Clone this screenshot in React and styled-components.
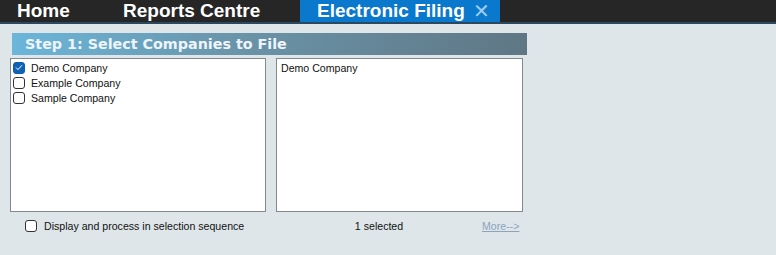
import React, { useState } from 'react'
import styled, { createGlobalStyle } from 'styled-components'

const GlobalStyle = createGlobalStyle`
	body {
		margin: 0;
		background: #dfe6ea;
		font-family: 'Liberation Sans', Arial, sans-serif;
	}
`

const Page = styled.div`
	width: 776px;
	height: 255px;
	background: #dfe6ea;
	overflow: hidden;
`
const TabBar = styled.div`
	display: flex;
	height: 22px;
	background: #262626;
	border-bottom: 2px solid #2a4860;
`
const Tab = styled.div`
	width: ${(p) => p.width}px;
	box-sizing: border-box;
	padding-left: 17px;
	display: flex;
	align-items: center;
	gap: 8px;
	background: ${(p) => (p.active ? '#0a78cc' : 'transparent')};
	color: #ffffff;
	font-family: 'Liberation Sans', Arial, sans-serif;
	font-weight: bold;
	font-size: 19px;
	line-height: 22px;
	white-space: nowrap;
`
const Close = styled.span`
	color: #9fcdf0;
	font-size: 20px;
	font-weight: normal;
	margin-left: 0px;
`
const Content = styled.div`
	padding: 9px 0 0 10px;
	width: 517px;
`
const Banner = styled.div`
	margin-left: 2px;
	height: 22px;
	padding-left: 13px;
	background: linear-gradient(to right, #6bb6da 0%, #6a93a8 45%, #5f7785 100%);
	color: #eef5fa;
	font-family: 'DejaVu Sans', Verdana, sans-serif;
	font-weight: bold;
	font-size: 14.3px;
	line-height: 23px;
`
const Lists = styled.div`
	display: flex;
	gap: 10px;
	margin-top: 3px;
`
const ListBox = styled.div`
	width: ${(p) => p.width}px;
	height: 154px;
	box-sizing: border-box;
	background: #ffffff;
	border: 1px solid #828790;
	padding: ${(p) => (p.plain ? '3px 4px' : '1px 2px')};
	font-size: 10.6px;
	color: #111;
`
const Row = styled.label`
	display: flex;
	align-items: center;
	gap: 6px;
	height: 15px;
	white-space: nowrap;
	cursor: default;
`
const Box = styled.span`
	width: 12px;
	height: 12px;
	box-sizing: border-box;
	border-radius: 3px;
	border: 1px solid ${(p) => (p.checked ? '#0f5fb0' : '#333')};
	background: ${(p) => (p.checked ? '#0f62b4' : '#fff')};
	display: flex;
	align-items: center;
	justify-content: center;
	flex-shrink: 0;
`
const Footer = styled.div`
	display: flex;
	align-items: center;
	height: 28px;
	font-size: 10.6px;
	color: #111;
`
const SeqOption = styled(Row)`
	width: 266px;
	box-sizing: border-box;
	padding-left: 15px;
	gap: 7px;
`
const Count = styled.div`
	width: 206px;
	text-align: center;
`
const More = styled.a`
	color: #8aa4bd;
	text-decoration: underline;
	font-size: 10.6px;
	white-space: nowrap;
	cursor: pointer;
`

const Check = ({ checked }) => (
	<Box checked={checked}>
		{checked && (
			<svg width='8' height='7' viewBox='0 0 8 7'>
				<path d='M1 3.6 L3 5.6 L7 1.2' stroke='#ffffff' strokeWidth='1' fill='none' />
			</svg>
		)}
	</Box>
)

const companies = ['Demo Company', 'Example Company', 'Sample Company']

const App = () => {
	const [selected, setSelected] = useState(['Demo Company'])
	const [sequence, setSequence] = useState(false)

	const toggle = (name) => {
		setSelected((prev) =>
			prev.includes(name) ? prev.filter((n) => n !== name) : [...prev, name],
		)
	}

	return (
		<Page>
			<GlobalStyle />
			<TabBar>
				<Tab width={106}>Home</Tab>
				<Tab width={194}>Reports Centre</Tab>
				<Tab width={200} active>
					Electronic Filing <Close>✕</Close>
				</Tab>
			</TabBar>
			<Content>
				<Banner>Step 1: Select Companies to File</Banner>
				<Lists>
					<ListBox width={256}>
						{companies.map((name) => (
							<Row key={name} onClick={() => toggle(name)}>
								<Check checked={selected.includes(name)} />
								{name}
							</Row>
						))}
					</ListBox>
					<ListBox width={247} plain>
						{selected.map((name) => (
							<div key={name}>{name}</div>
						))}
					</ListBox>
				</Lists>
				<Footer>
					<SeqOption onClick={() => setSequence((s) => !s)}>
						<Check checked={sequence} />
						Display and process in selection sequence
					</SeqOption>
					<Count>{selected.length} selected</Count>
					<More>More--&gt;</More>
				</Footer>
			</Content>
		</Page>
	)
}

export default App
